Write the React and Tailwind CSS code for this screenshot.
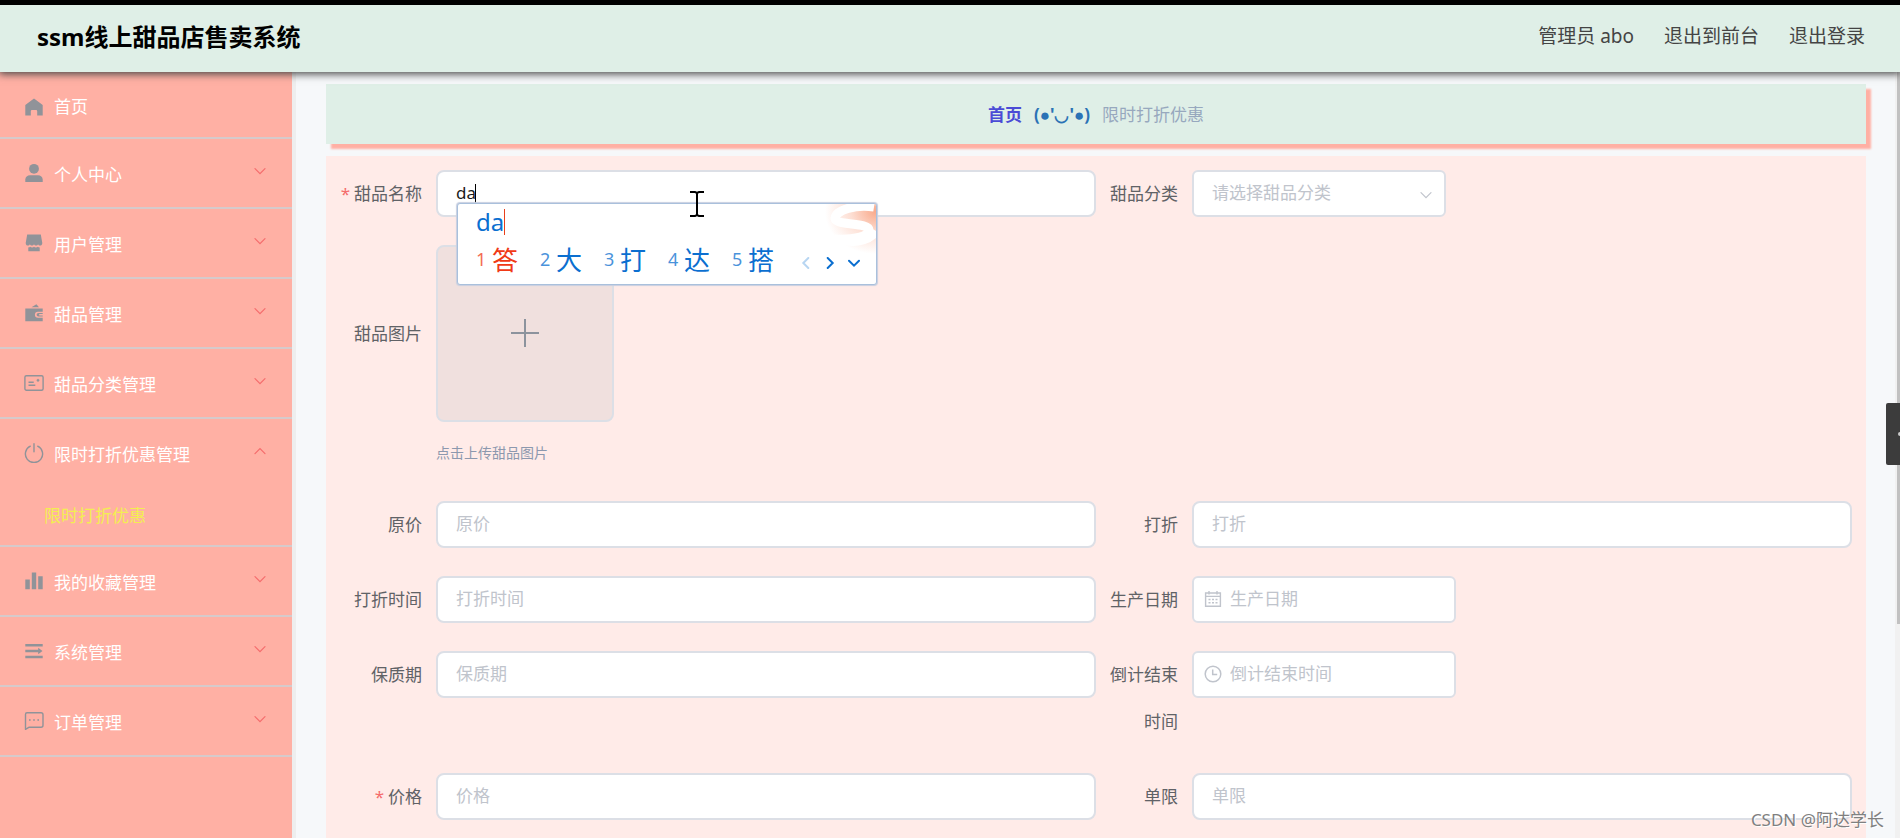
import React from "react";

const iconClass = "h-5 w-5 shrink-0";

const HomeIcon = () => (
  <svg viewBox="0 0 20 20" className={iconClass} fill="currentColor" aria-hidden="true">
    <path d="M10 1.400 18.700 8v10.600h-5.500v-4.300a1.200 1.200 0 0 0-1.200-1.200H8a1.200 1.200 0 0 0-1.200 1.200v4.300H1.300V8z" />
  </svg>
);
const UserIcon = () => (
  <svg viewBox="0 0 20 20" className={iconClass} fill="currentColor" aria-hidden="true">
    <circle cx="10" cy="5.800" r="4.900" />
    <path d="M1.300 19v-2.500C1.300 14 3.400 12.300 6 12.300h8c2.600 0 4.700 1.700 4.700 4.200V19z" />
  </svg>
);
const ShopIcon = () => (
  <svg viewBox="0 0 20 20" className={iconClass} fill="currentColor" aria-hidden="true">
    <path d="M3.200 1.500h13.600l1.500 8.500c0 1.700-1 2.600-2.200 2.600-1.100 0-1.800-.5-2-1.300-.3.800-1.100 1.300-2 1.300s-1.800-.5-2.100-1.300c-.3.800-1.100 1.300-2.100 1.300s-1.700-.5-2-1.300c-.3.800-1 1.300-2 1.300-1.200 0-2.200-.9-2.200-2.600z" />
    <path d="M4.300 14.400c1 0 1.400-.2 1.900-.6.9.8 2.800.8 3.800 0 1 .8 2.900.8 3.800 0 .5.4.9.6 1.900.6V18.300H4.300z" />
  </svg>
);
const WalletIcon = () => (
  <svg viewBox="0 0 20 20" className={iconClass} fill="currentColor" aria-hidden="true">
    <path d="M7.500 4.300 12.400 1.300l2.600 3z" />
    <path d="M1.300 5.500h17.400v3.300h-4.800a3 3 0 0 0 0 6h4.800v3.500H1.300z" />
    <path d="M18.700 10h-4.300a1.800 1.800 0 0 0 0 3.600h4.300v-1h-3.500v-1.600h3.500z" />
  </svg>
);
const CardIcon = () => (
  <svg viewBox="0 0 20 20" className={iconClass} fill="none" stroke="currentColor" strokeWidth="1.400" aria-hidden="true">
    <rect x="0.900" y="2.700" width="18.200" height="14.600" rx="1.500" />
    <path d="M4.500 9.300h5.200M4.500 12.300h6.800" />
    <circle cx="14" cy="7.300" r="1.100" fill="currentColor" strokeWidth="0.600" />
  </svg>
);
const PowerIcon = () => (
  <svg viewBox="0 0 20 20" className={iconClass} fill="none" stroke="currentColor" strokeWidth="1.400" strokeLinecap="round" aria-hidden="true">
    <path d="M10 .8v8M6.300 3.200a8.600 8.600 0 1 0 7.400 0" />
  </svg>
);
const ChartIcon = () => (
  <svg viewBox="0 0 20 20" className={iconClass} fill="currentColor" aria-hidden="true">
    <path d="M1.300 8.400h4.500v9.900H1.300zM7.800 1.500h4.400v16.800H7.800zM14.200 5.300h4.500v13h-4.500z" />
  </svg>
);
const FoldIcon = () => (
  <svg viewBox="0 0 20 20" className={iconClass} fill="currentColor" aria-hidden="true">
    <path d="M1.300 3h17.400v2.500H1.300zM1.300 8.800h13v2.400h-13zM1.300 14.800h17.400v2.500H1.300zM14.200 6.800l4.300 3.200-4.300 3.200z" />
  </svg>
);
const ChatIcon = () => (
  <svg viewBox="0 0 20 20" className={iconClass} fill="none" stroke="currentColor" strokeWidth="1.400" strokeLinejoin="round" aria-hidden="true">
    <path d="M3 1.800h14c1.100 0 2 .9 2 2v10.400c0 1.100-.9 2-2 2H5.200L1.500 18.300V3.500c0-1 .6-1.700 1.500-1.700z" />
    <path d="M5 9h1.600M9.200 9h1.600M13.400 9H15" strokeWidth="1.700" />
  </svg>
);

const Chevron = ({ up = false, className = "" }) => (
  <svg viewBox="0 0 12 12" className={`h-3 w-3 ${className}`} fill="none" stroke="currentColor" strokeWidth="1.200" strokeLinecap="round" aria-hidden="true">
    <path d={up ? "M1 8.700l5-5 5 5" : "M1 3.700l5 5 5-5"} />
  </svg>
);

const menu = [
  { label: "个人中心", Icon: UserIcon },
  { label: "用户管理", Icon: ShopIcon },
  { label: "甜品管理", Icon: WalletIcon },
  { label: "甜品分类管理", Icon: CardIcon },
  { label: "限时打折优惠管理", Icon: PowerIcon, children: ["限时打折优惠"] },
  { label: "我的收藏管理", Icon: ChartIcon },
  { label: "系统管理", Icon: FoldIcon },
  { label: "订单管理", Icon: ChatIcon },
];

function Sidebar() {
  return (
    <nav className="w-74 shrink-0 border-r-4 border-[#eeeeee] bg-[#ffb0a4] text-[17px]">
      <ul>
        <li className="border-b-2 border-[#d6cacb]">
          <a href="#home" className="flex h-[65px] items-center gap-2.5 pl-6 pt-1">
            <span className="text-[#909399]"><HomeIcon /></span>
            <span className="text-white">首页</span>
          </a>
        </li>
        {menu.map(({ label, Icon, children }) => (
          <li key={label} className="border-b-2 border-[#d6cacb]">
            <button type="button" aria-expanded={Boolean(children)} className="flex h-[68px] w-full items-center gap-2.5 pl-6 pr-[26px]">
              <span className="text-[#909399]"><Icon /></span>
              <span className="flex-1 pt-1 text-left text-white">{label}</span>
              <Chevron up={Boolean(children)} className="mb-1 text-[#f56c6c]" />
            </button>
            {children && (
              <ul>
                {children.map((c) => (
                  <li key={c}>
                    <a href="#discount" className="flex h-[58px] items-center pl-11 text-[#f3ee52]">{c}</a>
                  </li>
                ))}
              </ul>
            )}
          </li>
        ))}
      </ul>
    </nav>
  );
}

const box = "h-[47px] border-2 border-[#dcdfe6] bg-white pb-0.5 text-[17px] text-[#1c1c1c] outline-none placeholder:text-[#c0c4cc]";

function Field({ id, label, required = false, wide = false, children }) {
  return (
    <div className={wide ? "col-span-2 flex" : "flex"}>
      <label htmlFor={id} className={`w-24 shrink-0 pr-3.5 text-right text-[17px] text-[#606266] ${wide ? "leading-[177px]" : "leading-[47px]"} ${required ? "whitespace-nowrap" : ""}`}>
        {required && <span className="mr-1 text-[#f56c6c]">*</span>}
        {label}
      </label>
      <div className="relative min-w-0 flex-1">{children}</div>
    </div>
  );
}

const TextField = ({ id, label, required }) => (
  <Field id={id} label={label} required={required}>
    <input id={id} type="text" placeholder={label} className={`${box} w-full rounded-lg px-[18px]`} />
  </Field>
);

const CalendarIcon = () => (
  <svg viewBox="0 0 18 18" className="h-4.5 w-4.5" fill="none" stroke="currentColor" strokeWidth="1.400" aria-hidden="true">
    <path d="M1.600 3h14.800v13.200H1.600zM1.600 6.400h14.800M5 1v3.400M13 1v3.400" />
    <path d="M4.500 9.500h2M8 9.500h2M11.500 9.500h2M4.500 12.700h2M8 12.700h2M11.500 12.700h2" />
  </svg>
);
const ClockIcon = () => (
  <svg viewBox="0 0 18 18" className="h-4.5 w-4.5" fill="none" stroke="currentColor" strokeWidth="1.500" aria-hidden="true">
    <circle cx="9" cy="9" r="7.800" />
    <path d="M8.700 4.500v5h4.500" />
  </svg>
);

const DateField = ({ id, label, Icon }) => (
  <Field id={id} label={label}>
    <div className="relative w-66">
      <span className="absolute left-3 top-3.5 text-[#c0c4cc]"><Icon /></span>
      <input id={id} type="text" placeholder={label} className={`${box} w-full rounded-md pl-9 pr-3`} />
    </div>
  </Field>
);

const candidates = ["答", "大", "打", "达", "搭"];

function InputMethod() {
  return (
    <div className="absolute left-[21px] top-[33px] z-20 w-[420px] overflow-hidden rounded-[3px] border border-[#a9c0dc] bg-white text-[#0b6fd0] shadow-[0_0_1px_1px_#c8cfe0]">
      <svg viewBox="0 0 60 50" className="absolute right-0 top-0 h-[50px] w-[60px]" aria-hidden="true">
        <defs>
          <radialGradient id="glow" cx="1" cy="0.150" r="0.850">
            <stop offset="0" stopColor="#f9a98a" />
            <stop offset="0.500" stopColor="#fddfd4" />
            <stop offset="1" stopColor="#ffffff" />
          </radialGradient>
        </defs>
        <rect width="60" height="50" fill="url(#glow)" />
        <path d="M58 3C40 0 20 6 19 14c-1 8 34 4 34 12 0 7-16 10-34 9M60 27C55 35 42 40 26 36" fill="none" stroke="#ffffff" strokeWidth="9" />
      </svg>
      <div className="flex h-[35px] items-center pl-[18px] text-2xl">
        <span>da</span>
        <span className="h-[26px] w-px bg-[#e8401c]" />
      </div>
      <div className="flex h-[45px] items-center pb-0.5 pl-[18px]">
        {candidates.map((c, i) => (
          <button key={c} type="button" className={`flex w-16 items-center gap-1.5 ${i === 0 ? "text-[#f03a17]" : ""}`}>
            <span className="w-2.5 pb-1 text-lg opacity-75">{i + 1}</span>
            <span className="text-[26px]">{c}</span>
          </button>
        ))}
        <div className="flex items-center gap-3 pl-1 pt-1">
          <Chevron className="rotate-90 text-[#b8d6f2] stroke-2" />
          <Chevron className="-rotate-90 stroke-2" />
          <Chevron className="stroke-2" />
        </div>
      </div>
    </div>
  );
}

function DessertForm() {
  return (
    <form className="grid grid-cols-2 gap-y-7 bg-[#ffebe8] p-3.5 pb-20">
      <Field id="name" label="甜品名称" required>
        <input id="name" type="text" defaultValue="da" className={`${box} w-full rounded-lg px-[18px]`} />
        <span className="absolute left-[39px] top-3.5 h-[19px] w-px bg-black" />
        <InputMethod />
        <svg viewBox="0 0 16 26" className="absolute left-[253px] top-[21px] z-30 h-[26px] w-4" fill="none" stroke="#000000" strokeWidth="2" aria-hidden="true">
          <path d="M1 1h5l2 1 2-1h5M8 2v22M1 25h5l2-1 2 1h5" />
        </svg>
      </Field>
      <Field id="category" label="甜品分类">
        <div className="relative w-[254px]">
          <select id="category" className={`${box} w-full appearance-none rounded-md px-[18px] text-[#c0c4cc]!`}>
            <option>请选择甜品分类</option>
          </select>
          <Chevron className="pointer-events-none absolute right-3.5 top-[19px] text-[#c0c4cc]" />
        </div>
      </Field>
      <Field id="picture" label="甜品图片" wide>
        <button id="picture" type="button" aria-label="甜品图片" className="flex h-[177px] w-[178px] items-center justify-center rounded-lg border-2 border-[#dcdfe6] bg-[#f0e0de] pb-0.5 text-[#8c939d]">
          <svg viewBox="0 0 28 28" className="h-7 w-7" fill="none" stroke="currentColor" strokeWidth="2" aria-hidden="true">
            <path d="M14 0v28M0 14h28" />
          </svg>
        </button>
        <p className="flex h-[51px] items-center pt-2.5 text-sm text-[#8c98ae]">点击上传甜品图片</p>
      </Field>
      <TextField id="price0" label="原价" />
      <TextField id="discount" label="打折" />
      <TextField id="discountTime" label="打折时间" />
      <DateField id="produced" label="生产日期" Icon={CalendarIcon} />
      <TextField id="shelf" label="保质期" />
      <DateField id="countdown" label="倒计结束时间" Icon={ClockIcon} />
      <TextField id="price" label="价格" required />
      <TextField id="limit" label="单限" />
    </form>
  );
}

export default function App() {
  return (
    <div className="relative flex h-screen flex-col overflow-hidden border-t-[5px] border-black bg-[#f6f8fa] font-['Noto_Sans','Noto_Sans_CJK_SC',sans-serif]">
      <header className="z-10 flex h-[67px] shrink-0 items-center justify-between bg-[#dfefe7] pb-1 pl-[37px] pr-[35px] shadow-[0_1px_8px_1px_#444444]">
        <h1 className="text-2xl font-bold text-black">ssm线上甜品店售卖系统</h1>
        <nav className="flex gap-[30px] text-[19px] text-[#444444]">
          <span>管理员 abo</span>
          <a href="#front">退出到前台</a>
          <a href="#logout">退出登录</a>
        </nav>
      </header>
      <div className="flex min-h-0 flex-1">
        <Sidebar />
        <main className="flex min-w-0 flex-1 flex-col gap-3 overflow-hidden pl-[30px] pr-[29px] pt-3">
          <div className="flex h-[60px] shrink-0 items-center justify-center gap-3 bg-[#dfefe7] pt-0.5 text-[17px] shadow-[5px_5px_2px_#ffb0a4]">
            <a href="#home" className="font-bold text-[#4b4bd6]">首页</a>
            <span className="font-['Noto_Sans','Liberation_Sans','Noto_Sans_CJK_SC',sans-serif] font-bold text-[#2b72b5]">(●&apos;◡&apos;●)</span>
            <span className="text-[#97a8be]">限时打折优惠</span>
          </div>
          <DessertForm />
        </main>
        <div className="w-[5px] shrink-0 bg-[#f1f1f1] pl-0.5">
          <div className="h-[72%] bg-[#c1c1c1]" />
        </div>
      </div>
      <button type="button" aria-label="展开" className="absolute right-0 top-[398px] z-20 flex h-[62px] w-3.5 items-center justify-end overflow-hidden rounded-l-xs bg-[#3c3c3c]">
        <span className="h-1 w-0.5 rounded-l-full bg-[#cccccc]" />
      </button>
      <span className="absolute bottom-1.5 right-4 z-20 text-[17px] text-[#808080] [text-shadow:1px_1px_0_#ffffff]">CSDN @阿达学长</span>
    </div>
  );
}
